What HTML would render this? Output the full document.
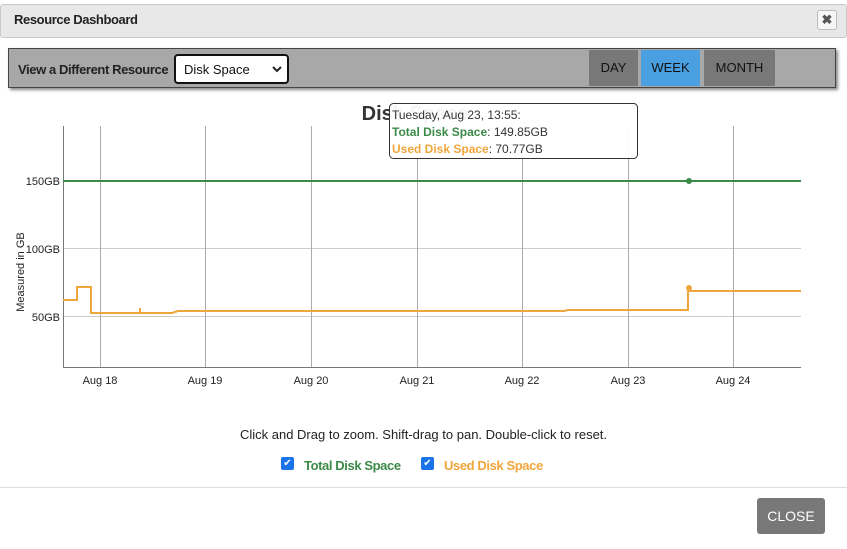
<!DOCTYPE html>
<html><head><style>
body{margin:0;width:847px;height:549px;background:#fff;font-family:"Liberation Sans",sans-serif;position:relative;overflow:hidden;color:#333}
.abs{position:absolute}
</style></head><body>
<div class="abs" style="left:0;top:4px;width:845px;height:32px;background:#e8e8e8;border:1px solid #c8c8c8;border-radius:3px"></div>
<div class="abs" style="left:14px;top:12px;font-size:13px;font-weight:bold;color:#222;letter-spacing:-0.4px">Resource Dashboard</div>
<div class="abs" style="left:817px;top:10px;width:18px;height:18px;border:1px solid #bbb;border-radius:3px;background:#f6f6f6;font-size:13px;text-align:center;line-height:18px;color:#555;font-weight:bold">✖</div>

<div class="abs" style="left:8px;top:48px;width:826px;height:38px;background:#a8a8a8;border:1px solid #444;box-shadow:2px 2px 3px #888"></div>
<div class="abs" style="left:18px;top:62px;font-size:13px;font-weight:bold;color:#222;letter-spacing:-0.4px">View a Different Resource</div>
<div class="abs" style="left:174px;top:54px;width:115px;height:30px;background:#fff;border:2px solid #111;border-radius:4px;box-sizing:border-box"></div>
<div class="abs" style="left:184px;top:62px;font-size:13px;color:#111">Disk Space</div>
<svg class="abs" style="left:272px;top:65px" width="10" height="8"><path d="M1 2 L5 6 L9 2" stroke="#222" stroke-width="2" fill="none"/></svg>
<div class="abs" style="left:589px;top:50px;width:49px;height:36px;background:#787878;color:#111;font-size:13px;text-align:center;line-height:36px">DAY</div>
<div class="abs" style="left:641px;top:50px;width:59px;height:36px;background:#4a9fe0;color:#111;font-size:13px;text-align:center;line-height:36px">WEEK</div>
<div class="abs" style="left:704px;top:50px;width:71px;height:36px;background:#787878;color:#111;font-size:13px;text-align:center;line-height:36px">MONTH</div>

<svg class="abs" style="left:0;top:0" width="847" height="420">
<text x="415" y="120" font-size="20" font-weight="bold" fill="#333" text-anchor="middle" font-family="Liberation Sans">Disk Space</text>
<g stroke="#ccc" stroke-width="1">
<line x1="63" y1="181.5" x2="801" y2="181.5"/><line x1="63" y1="248.5" x2="801" y2="248.5"/><line x1="63" y1="316.5" x2="801" y2="316.5"/>
</g>
<g stroke="#aaa" stroke-width="1">
<line x1="100.5" y1="126" x2="100.5" y2="367"/><line x1="205.5" y1="126" x2="205.5" y2="367"/><line x1="311.5" y1="126" x2="311.5" y2="367"/><line x1="417.5" y1="126" x2="417.5" y2="367"/><line x1="522.5" y1="126" x2="522.5" y2="367"/><line x1="628.5" y1="126" x2="628.5" y2="367"/><line x1="733.5" y1="126" x2="733.5" y2="367"/>
</g>
<path d="M63.5 126 V367.5 H801" stroke="#777" fill="none"/>
<line x1="63" y1="181" x2="801" y2="181" stroke="#3c8a48" stroke-width="2"/>
<path d="M63 300 H77 V287 H91 V313 H140 V308 V313 H172 L178 311 H280 L290 311 H564 L568 310 H688 V291 H801" stroke="#f0a63c" stroke-width="2" fill="none"/>
<circle cx="689" cy="181" r="3" fill="#3c8a48"/><circle cx="689" cy="288" r="3" fill="#f0a63c"/>
<g font-size="11" fill="#222" font-family="Liberation Sans" text-anchor="end">
<text x="60" y="185">150GB</text><text x="60" y="253">100GB</text><text x="60" y="321">50GB</text></g>
<text transform="translate(24,272) rotate(-90)" font-size="11" fill="#222" text-anchor="middle">Measured in GB</text>
<g font-size="11" fill="#222" text-anchor="middle">
<text x="100" y="384">Aug 18</text><text x="205" y="384">Aug 19</text><text x="311" y="384">Aug 20</text><text x="417" y="384">Aug 21</text><text x="522" y="384">Aug 22</text><text x="628" y="384">Aug 23</text><text x="733" y="384">Aug 24</text></g>
<rect x="389.5" y="103.5" width="248" height="55" rx="4" fill="#fff" fill-opacity="0.95" stroke="#333"/>
<text x="392" y="119" font-size="12" fill="#333">Tuesday, Aug 23, 13:55:</text>
<text x="392" y="136" font-size="12"><tspan fill="#3c8a48" font-weight="bold">Total Disk Space</tspan><tspan fill="#333">: 149.85GB</tspan></text>
<text x="392" y="153" font-size="12"><tspan fill="#f0a63c" font-weight="bold">Used Disk Space</tspan><tspan fill="#333">: 70.77GB</tspan></text>
</svg>

<div class="abs" style="left:0;width:847px;top:427px;text-align:center;font-size:13px;color:#222">Click and Drag to zoom. Shift-drag to pan. Double-click to reset.</div>
<div class="abs" style="left:281px;top:457px;width:13px;height:13px;background:#1a73e8;border-radius:2px;color:#fff;font-size:10px;text-align:center;line-height:13px">✔</div>
<div class="abs" style="left:304px;top:458px;font-size:13px;font-weight:bold;color:#3c8a48;letter-spacing:-0.4px">Total Disk Space</div>
<div class="abs" style="left:421px;top:457px;width:13px;height:13px;background:#1a73e8;border-radius:2px;color:#fff;font-size:10px;text-align:center;line-height:13px">✔</div>
<div class="abs" style="left:444px;top:458px;font-size:13px;font-weight:bold;color:#f0a63c;letter-spacing:-0.4px">Used Disk Space</div>
<div class="abs" style="left:0;top:487px;width:847px;height:1px;background:#ddd"></div>
<div class="abs" style="left:757px;top:498px;width:68px;height:36px;background:#787878;border-radius:3px;color:#fff;font-size:14px;text-align:center;line-height:36px">CLOSE</div>
</body></html>
